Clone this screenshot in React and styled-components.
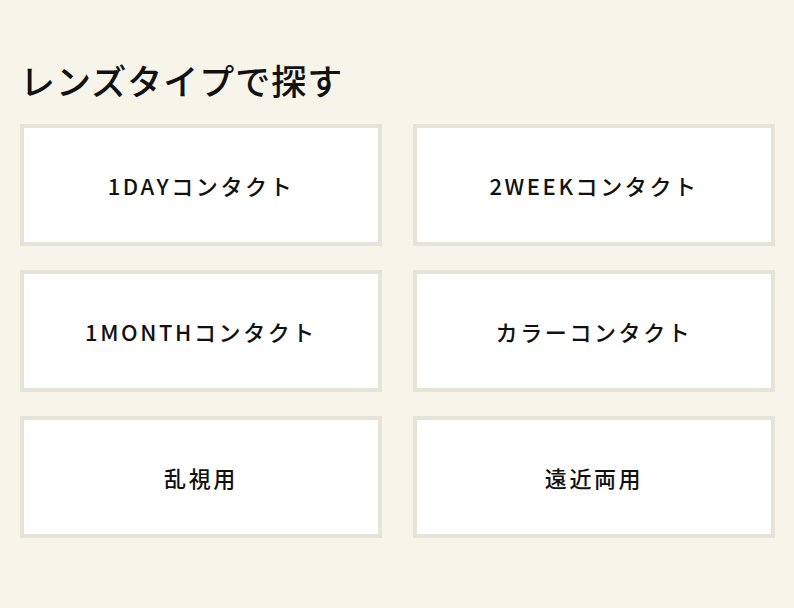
import React from "react";
import styled, { createGlobalStyle } from "styled-components";

const Global = createGlobalStyle`
  html, body { margin: 0; padding: 0; background: #f7f5ea; }
  body { font-family: "Noto Sans CJK JP", "Noto Sans", sans-serif; color: #111; }
`;

const Page = styled.section`
  padding: 56px 19px 60px 20px;
`;

const Title = styled.h2`
  margin: 0 0 20px 0;
  font-size: 35px;
  font-weight: 500;
  line-height: 48px;
  letter-spacing: 1px;
`;

const Grid = styled.div`
  display: grid;
  grid-template-columns: 1fr 1fr;
  column-gap: 31px;
  row-gap: 24px;
`;

const Card = styled.a`
  display: flex;
  align-items: center;
  justify-content: center;
  height: 122px;
  box-sizing: border-box;
  background: #fff;
  border: 4px solid #e6e3d7;
  font-size: 22px;
  font-weight: 500;
  letter-spacing: 2.6px;
  color: #111;
  text-decoration: none;
`;

const items = [
  "1DAYコンタクト",
  "2WEEKコンタクト",
  "1MONTHコンタクト",
  "カラーコンタクト",
  "乱視用",
  "遠近両用",
];

export default function App() {
  return (
    <>
      <Global />
      <Page>
        <Title>レンズタイプで探す</Title>
        <Grid>
          {items.map((t) => (
            <Card key={t} href="#">{t}</Card>
          ))}
        </Grid>
      </Page>
    </>
  );
}
